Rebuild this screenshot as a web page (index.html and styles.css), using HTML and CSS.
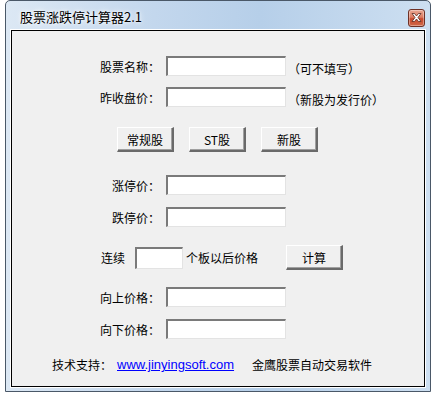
FILE: index.html
```html
<!DOCTYPE html>
<html lang="zh-CN">
<head>
    <meta charset="UTF-8">
    <title>股票涨跌停计算器2.1</title>
    <link rel="stylesheet" href="styles.css">
</head>
<body>
    <div class="window">
        <div class="title-bar">
            <span class="title-text">股票涨跌停计算器2.1</span>
            <button class="close-btn" title="关闭">
                <svg width="11" height="9" viewBox="0 0 11 9">
                    <path d="M1 0.5 L3.5 0.5 L5.5 3 L7.5 0.5 L10 0.5 L7 4.5 L10 8.5 L7.5 8.5 L5.5 6 L3.5 8.5 L1 8.5 L4 4.5 Z" fill="#fff" stroke="#5a2a20" stroke-width="0.8"/>
                </svg>
            </button>
        </div>

        <div class="client">
            <div class="row row-name">
                <label class="label">股票名称：</label>
                <input class="field" type="text">
                <span class="hint">（可不填写）</span>
            </div>
            <div class="row row-close">
                <label class="label">昨收盘价：</label>
                <input class="field" type="text">
                <span class="hint">（新股为发行价）</span>
            </div>

            <div class="btn-row">
                <button class="win-btn">常规股</button>
                <button class="win-btn">ST股</button>
                <button class="win-btn">新股</button>
            </div>

            <div class="row row-up-limit">
                <label class="label">涨停价：</label>
                <input class="field" type="text">
            </div>
            <div class="row row-down-limit">
                <label class="label">跌停价：</label>
                <input class="field" type="text">
            </div>

            <div class="row row-count">
                <span class="count-lead">连续</span>
                <input class="field small" type="text">
                <span class="count-tail">个板以后价格</span>
                <button class="win-btn calc-btn">计算</button>
            </div>

            <div class="row row-up">
                <label class="label">向上价格：</label>
                <input class="field" type="text">
            </div>
            <div class="row row-down">
                <label class="label">向下价格：</label>
                <input class="field" type="text">
            </div>

            <div class="footer">
                <span class="support">技术支持：</span>
                <a class="site-link" href="#">www.jinyingsoft.com</a>
                <span class="brand">金鹰股票自动交易软件</span>
            </div>
        </div>
    </div>
</body>
</html>
```

FILE: styles.css
```css
* {
    margin: 0;
    padding: 0;
    box-sizing: border-box;
}

body {
    background: #fff;
    font-family: "Noto Sans CJK SC", "DejaVu Sans", sans-serif;
    font-size: 12px;
    color: #000;
}

.window {
    margin-left: 5px;
    width: 426px;
    height: 392px;
    border: 1px solid #4a5868;
    border-radius: 5px 5px 0 0;
    background: linear-gradient(90deg, #dce8f4 0%, #c3d7ed 35%, #b6cfe9 60%, #cddff1 100%);
    padding: 0 5px 4px 5px;
    display: flex;
    flex-direction: column;
}

.title-bar {
    height: 29px;
    display: flex;
    align-items: center;
    justify-content: space-between;
    padding-left: 9px;
    flex-shrink: 0;
}

.title-text {
    font-size: 13px;
    color: #000;
    text-shadow: 0 0 6px #fff, 0 0 3px #fff;
    margin-top: 1px;
}

.close-btn {
    width: 17px;
    height: 18px;
    margin-top: 4px;
    border: 1px solid #6e3126;
    border-radius: 3px;
    background: linear-gradient(#e9a793 0%, #dc7c62 45%, #c8482c 55%, #d06a4a 100%);
    box-shadow: inset 0 0 0 1px rgba(255, 255, 255, 0.35);
    display: flex;
    align-items: center;
    justify-content: center;
}

.client {
    flex: 1;
    background: #f0f0f0;
    border: 1px solid #000;
    box-shadow: 0 0 0 1px #fff;
    padding-top: 25px;
}

.row {
    display: flex;
    align-items: center;
    height: 20px;
}

.label {
    width: 148px;
    text-align: right;
    margin-right: 6px;
}

.field {
    width: 120px;
    height: 20px;
    background: #fff;
    border-style: solid;
    border-width: 2px 1px 1px 2px;
    border-color: #7a7a7a #e3e3e3 #e3e3e3 #7a7a7a;
    outline: none;
}

.field.small {
    width: 48px;
    height: 22px;
}

.hint {
    margin-left: 2px;
    margin-top: 4px;
}

.row-close {
    margin-top: 11px;
}

.btn-row {
    display: flex;
    gap: 15px;
    padding-left: 105px;
    margin-top: 20px;
}

.win-btn {
    width: 57px;
    height: 25px;
    background: #f0f0f0;
    font-family: "Noto Sans CJK SC", "DejaVu Sans", sans-serif;
    font-size: 12px;
    color: #000;
    border-style: solid;
    border-width: 1px 2px 2px 1px;
    border-color: #fff #6a6a6a #6a6a6a #fff;
    box-shadow: inset -1px -1px 0 #a0a0a0;
}

.row-up-limit {
    margin-top: 23px;
}

.row-down-limit {
    margin-top: 12px;
}

.row-count {
    margin-top: 18px;
    height: 25px;
    padding-left: 89px;
}

.count-lead {
    width: 34px;
}

.count-tail {
    margin-left: 3px;
    width: 100px;
}

.row-up {
    margin-top: 17px;
}

.row-down {
    margin-top: 12px;
}

.footer {
    display: flex;
    align-items: center;
    margin-top: 17px;
    padding-left: 40px;
}

.support {
    width: 65px;
}

.site-link {
    font-family: "Liberation Sans", Arial, sans-serif;
    font-size: 13px;
    color: #00f;
    text-decoration: underline;
    width: 135px;
}

.brand {
    font-size: 12px;
}
```
